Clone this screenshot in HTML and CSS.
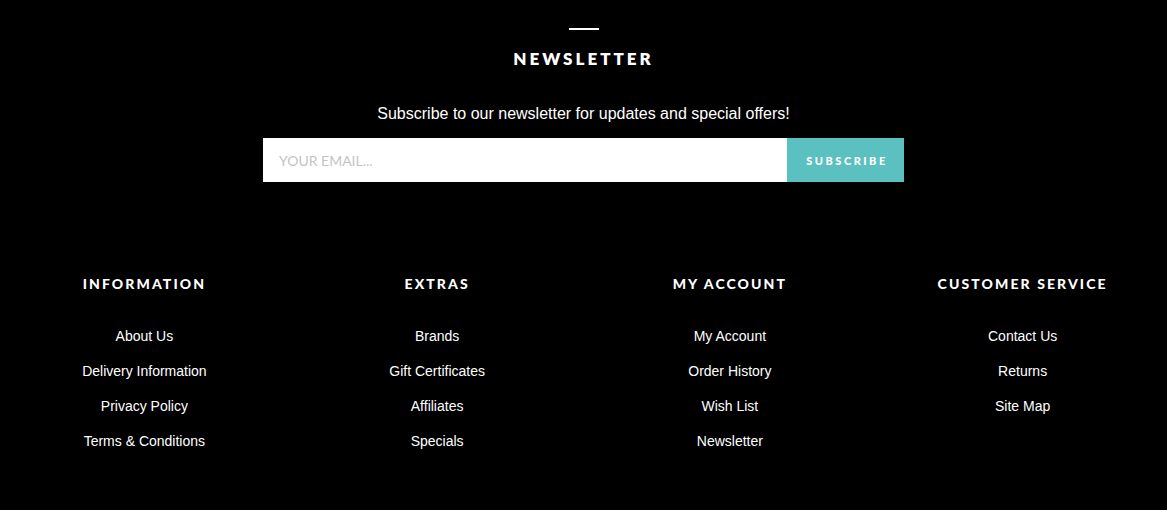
FILE: index.html
```html
<!DOCTYPE html>
<html>
<head>
<meta charset="utf-8">
<link rel="stylesheet" href="styles.css">
</head>
<body>
<footer class="footer">
  <section class="newsletter">
    <div class="rule"></div>
    <h2 class="nl-title">NEWSLETTER</h2>
    <p class="nl-text">Subscribe to our newsletter for updates and special offers!</p>
    <form class="nl-form">
      <input class="nl-input" type="text" placeholder="YOUR EMAIL...">
      <button class="nl-btn" type="button">SUBSCRIBE</button>
    </form>
  </section>
  <section class="links">
    <div class="col">
      <h5 class="col-title">INFORMATION</h5>
      <ul class="col-list">
        <li>About Us</li>
        <li>Delivery Information</li>
        <li>Privacy Policy</li>
        <li>Terms &amp; Conditions</li>
      </ul>
    </div>
    <div class="col">
      <h5 class="col-title">EXTRAS</h5>
      <ul class="col-list">
        <li>Brands</li>
        <li>Gift Certificates</li>
        <li>Affiliates</li>
        <li>Specials</li>
      </ul>
    </div>
    <div class="col">
      <h5 class="col-title">MY ACCOUNT</h5>
      <ul class="col-list">
        <li>My Account</li>
        <li>Order History</li>
        <li>Wish List</li>
        <li>Newsletter</li>
      </ul>
    </div>
    <div class="col">
      <h5 class="col-title">CUSTOMER SERVICE</h5>
      <ul class="col-list">
        <li>Contact Us</li>
        <li>Returns</li>
        <li>Site Map</li>
      </ul>
    </div>
  </section>
</footer>
</body>
</html>
```
FILE: styles.css
```css
html, body {
  margin: 0;
  padding: 0;
  background: #000;
  color: #fff;
  font-family: "Liberation Sans", Arial, sans-serif;
  overflow: hidden;
}
.footer {
  padding-top: 28px;
}
.newsletter {
  display: flex;
  flex-direction: column;
  align-items: center;
}
.rule {
  width: 30px;
  height: 2px;
  background: #fff;
  margin-left: 1px;
}
.nl-title {
  margin: 18px 0 0;
  font-family: Lato, sans-serif;
  font-weight: 800;
  font-size: 17px;
  letter-spacing: 3px;
  line-height: 22px;
}
.nl-text {
  margin: 35px 0 0;
  font-size: 16px;
  line-height: 18px;
}
.nl-form {
  display: flex;
  margin-top: 15px;
}
.nl-input {
  width: 524px;
  height: 44px;
  box-sizing: border-box;
  border: 0;
  padding: 0 16px;
  font-family: Lato, sans-serif;
  font-size: 14px;
  color: #333;
  background: #fff;
  outline: none;
}
.nl-input::placeholder {
  color: #c4c4c4;
}
.nl-btn {
  width: 117px;
  height: 44px;
  border: 0;
  background: #5bc0c0;
  color: #fff;
  font-family: Lato, sans-serif;
  font-weight: 900;
  font-size: 11px;
  letter-spacing: 2.5px;
  padding: 0 0 0 3px;
}
.links {
  display: grid;
  grid-template-columns: repeat(4, 1fr);
  margin: 93px -2px 0;
}
.col {
  text-align: center;
}
.col-title {
  margin: 0;
  font-family: Lato, sans-serif;
  font-weight: 900;
  font-size: 14px;
  letter-spacing: 2.1px;
  line-height: 18px;
}
.col-list {
  list-style: none;
  margin: 35px 0 0;
  padding: 0;
}
.col-list li {
  font-size: 14px;
  line-height: 16px;
  margin-bottom: 19px;
}
```
